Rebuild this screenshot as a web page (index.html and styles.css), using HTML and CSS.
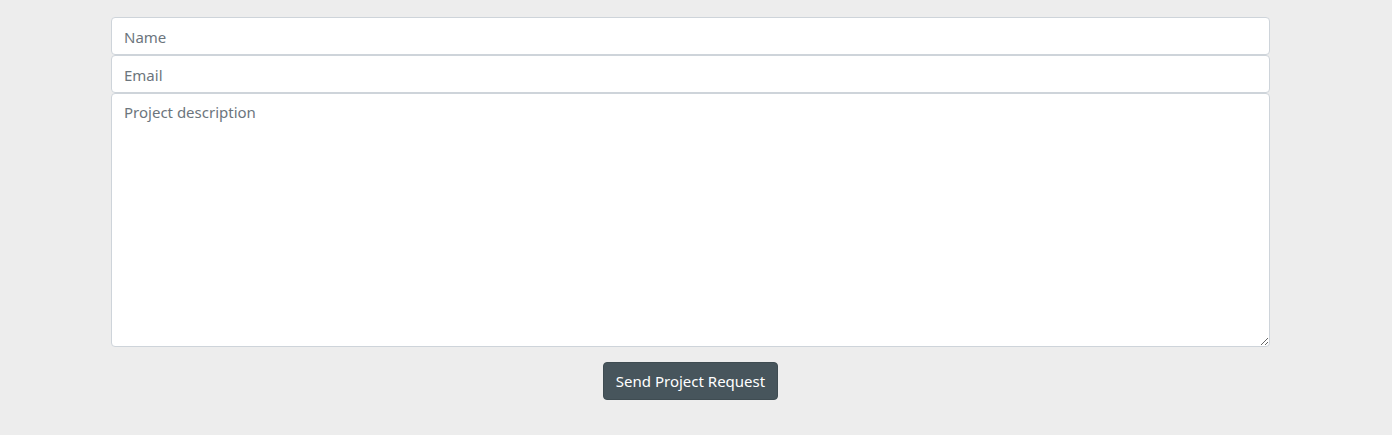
FILE: index.html
```html
<!DOCTYPE html>
<html>
<head>
<meta charset="utf-8">
<link rel="stylesheet" href="styles.css">
</head>
<body>
<form class="form">
  <input class="field" type="text" placeholder="Name">
  <input class="field" type="email" placeholder="Email">
  <textarea class="field area" placeholder="Project description"></textarea>
  <div class="actions">
    <button class="btn" type="button">Send Project Request</button>
  </div>
</form>
</body>
</html>
```
FILE: styles.css
```css
html, body {
  margin: 0;
  padding: 0;
  background: #ededed;
}
body {
  font-family: "Noto Sans", "Open Sans", sans-serif;
}
.form {
  display: flex;
  flex-direction: column;
  width: 1159px;
  margin: 17px 0 0 111px;
}
.field {
  box-sizing: border-box;
  display: block;
  width: 100%;
  height: 38px;
  margin: 0;
  padding: 7px 12px 5px 12px;
  font-family: inherit;
  font-size: 15px;
  line-height: 24px;
  color: #495057;
  background: #fff;
  border: 1px solid #ced4da;
  border-radius: 4px;
  outline: none;
}
.field::placeholder {
  color: #6c757d;
  opacity: 1;
}
.area {
  height: 254px;
  resize: vertical;
  padding-top: 6px;
}
.actions {
  display: flex;
  justify-content: center;
  margin-top: 15px;
}
.btn {
  box-sizing: border-box;
  height: 38px;
  width: 175px;
  padding: 0;
  white-space: nowrap;
  font-family: inherit;
  font-size: 15px;
  line-height: 36px;
  color: #fff;
  background: #47555c;
  border: 1px solid #3f4c52;
  border-radius: 4px;
}
```
